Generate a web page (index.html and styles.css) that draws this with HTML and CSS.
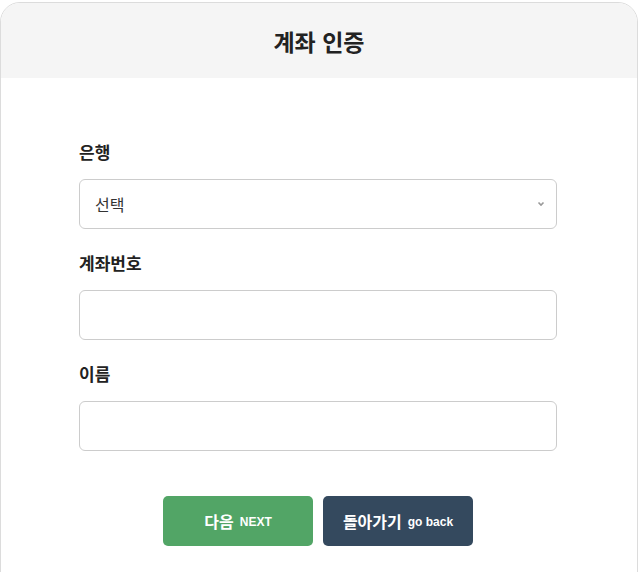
FILE: index.html
```html
<!DOCTYPE html>
<html lang="ko">
<head>
<meta charset="utf-8">
<title>계좌 인증</title>
<link rel="stylesheet" href="styles.css">
</head>
<body>
<div class="card">
  <div class="card-header">
    <h1 class="title">계좌 인증</h1>
  </div>
  <div class="card-body">
    <div class="field">
      <label class="label">은행</label>
      <div class="select">
        <span class="select-text">선택</span>
        <svg class="chevron" width="8" height="6" viewBox="0 0 8 6"><path d="M1.5 1.5 L4 4 L6.5 1.5" fill="none" stroke="#999" stroke-width="1.6"/></svg>
      </div>
    </div>
    <div class="field">
      <label class="label">계좌번호</label>
      <div class="input"></div>
    </div>
    <div class="field">
      <label class="label">이름</label>
      <div class="input"></div>
    </div>
    <div class="actions">
      <button class="btn btn-next"><span class="btn-ko">다음</span> <span class="btn-en">NEXT</span></button>
      <button class="btn btn-back"><span class="btn-ko">돌아가기</span> <span class="btn-en">go back</span></button>
    </div>
  </div>
</div>
</body>
</html>
```
FILE: styles.css
```css
html, body {
  margin: 0;
  padding: 0;
  background: #ffffff;
}
body {
  font-family: "Liberation Sans", "Noto Sans CJK KR", sans-serif;
  color: #222;
}
.card {
  margin-top: 2px;
  width: 636px;
  min-height: 600px;
  border: 1px solid #dcdcdc;
  border-radius: 20px;
  overflow: hidden;
  background: #fff;
}
.card-header {
  height: 75px;
  background: #f5f5f5;
  display: flex;
  align-items: center;
  justify-content: center;
}
.title {
  margin: 0;
  font-family: "Noto Sans CJK KR", sans-serif;
  font-size: 23px;
  font-weight: 700;
  color: #222;
  line-height: 30px;
}
.card-body {
  padding: 62px 80px 0 78px;
}
.field {
  margin-bottom: 22px;
}
.label {
  display: block;
  font-family: "Noto Sans CJK KR", sans-serif;
  font-size: 17px;
  font-weight: 700;
  line-height: 24px;
  color: #222;
  margin-bottom: 15px;
}
.select, .input {
  box-sizing: border-box;
  height: 50px;
  border: 1px solid #cccccc;
  border-radius: 6px;
  background: #fff;
}
.select {
  display: flex;
  align-items: center;
  justify-content: space-between;
  padding: 0 11px 0 15px;
}
.select-text {
  font-family: "Noto Sans CJK KR", sans-serif;
  font-size: 16px;
  color: #333;
  line-height: 20px;
}
.chevron {
  display: block;
}
.actions {
  display: flex;
  justify-content: center;
  gap: 10px;
  margin-top: 45px;
}
.btn {
  width: 150px;
  height: 50px;
  border: none;
  border-radius: 5px;
  color: #fff;
  font-family: "Liberation Sans", "Noto Sans CJK KR", sans-serif;
  font-weight: 700;
  display: flex;
  align-items: center;
  justify-content: center;
  gap: 6px;
  padding: 0;
}
.btn-next {
  background: #52a566;
}
.btn-back {
  background: #34495e;
}
.btn-ko {
  font-family: "Noto Sans CJK KR", sans-serif;
  font-size: 16px;
}
.btn-en {
  font-size: 12px;
  padding-top: 2px;
}
```
